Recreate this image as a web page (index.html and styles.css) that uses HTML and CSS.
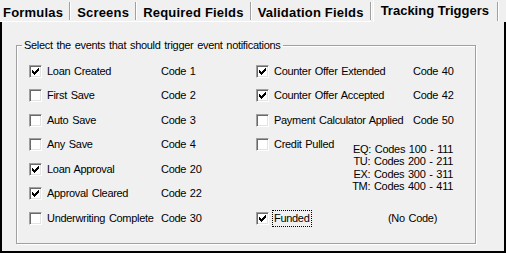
FILE: index.html
```html
<!DOCTYPE html>
<html lang="en">
  <head>
    <meta charset="utf-8">
    <title>Tracking Triggers</title>
    <link rel="stylesheet" href="styles.css">
  </head>
  <body>

  <div class="tabs">
    <div class="tab first">Formulas</div>
    <div class="tab">Screens</div>
    <div class="tab">Required Fields</div>
    <div class="tab">Validation Fields</div>
    <div class="tab active">Tracking Triggers</div>
  </div>

  <div class="panel">
    <fieldset class="group">
      <legend>Select the events that should trigger event notifications</legend>
      <div class="events">
        <div class="ev"><span class="box"><svg width="11" height="11" viewBox="0 0 11 11"><path d="M2 4h1v3h-1zM3 5h1v3h-1zM4 6h1v3h-1zM5 5h1v3h-1zM6 4h1v3h-1zM7 3h1v3h-1zM8 2h1v3h-1z"/></svg></span>Loan Created</div>
        <div class="code">Code 1</div>
        <div class="ev"><span class="box"><svg width="11" height="11" viewBox="0 0 11 11"><path d="M2 4h1v3h-1zM3 5h1v3h-1zM4 6h1v3h-1zM5 5h1v3h-1zM6 4h1v3h-1zM7 3h1v3h-1zM8 2h1v3h-1z"/></svg></span>Counter Offer Extended</div>
        <div class="code">Code 40</div>

        <div class="ev"><span class="box"></span>First Save</div>
        <div class="code">Code 2</div>
        <div class="ev"><span class="box"><svg width="11" height="11" viewBox="0 0 11 11"><path d="M2 4h1v3h-1zM3 5h1v3h-1zM4 6h1v3h-1zM5 5h1v3h-1zM6 4h1v3h-1zM7 3h1v3h-1zM8 2h1v3h-1z"/></svg></span>Counter Offer Accepted</div>
        <div class="code">Code 42</div>

        <div class="ev"><span class="box"></span>Auto Save</div>
        <div class="code">Code 3</div>
        <div class="ev"><span class="box"></span>Payment Calculator Applied</div>
        <div class="code">Code 50</div>

        <div class="ev"><span class="box"></span>Any Save</div>
        <div class="code">Code 4</div>
        <div class="credit">
          <div class="ev"><span class="box"></span>Credit Pulled</div>
          <div class="bureaus">
            <div>EQ: Codes 100 - 111</div>
            <div>TU: Codes 200 - 211</div>
            <div>EX: Codes 300 - 311</div>
            <div>TM: Codes 400 - 411</div>
          </div>
        </div>

        <div class="ev"><span class="box"><svg width="11" height="11" viewBox="0 0 11 11"><path d="M2 4h1v3h-1zM3 5h1v3h-1zM4 6h1v3h-1zM5 5h1v3h-1zM6 4h1v3h-1zM7 3h1v3h-1zM8 2h1v3h-1z"/></svg></span>Loan Approval</div>
        <div class="code">Code 20</div>

        <div class="ev"><span class="box"><svg width="11" height="11" viewBox="0 0 11 11"><path d="M2 4h1v3h-1zM3 5h1v3h-1zM4 6h1v3h-1zM5 5h1v3h-1zM6 4h1v3h-1zM7 3h1v3h-1zM8 2h1v3h-1z"/></svg></span>Approval Cleared</div>
        <div class="code">Code 22</div>

        <div class="ev"><span class="box"></span>Underwriting Complete</div>
        <div class="code">Code 30</div>
        <div class="ev"><span class="box"><svg width="11" height="11" viewBox="0 0 11 11"><path d="M2 4h1v3h-1zM3 5h1v3h-1zM4 6h1v3h-1zM5 5h1v3h-1zM6 4h1v3h-1zM7 3h1v3h-1zM8 2h1v3h-1z"/></svg></span><span class="focus">Funded</span></div>
        <div class="code nocode">(No Code)</div>
      </div>
    </fieldset>
  </div>

  </body>
</html>
```

FILE: styles.css
```css
html {
  height: 100%;
}
body {
  margin: 0;
  padding: 0;
  width: 506px;
  height: 253px;
  display: flex;
  flex-direction: column;
  background: #f0f0f0;
  color: #000;
  font-family: "Liberation Sans", Arial, sans-serif;
  font-size: 11px;
  line-height: 13px;
  letter-spacing: -0.3px;
  word-spacing: 1px;
  overflow: hidden;
}

/* tab strip */
.tabs {
  display: flex;
  height: 22px;
  flex: none;
}
.tab {
  font: bold 13px "Liberation Sans", Arial, sans-serif;
  letter-spacing: 0.2px;
  word-spacing: 0;
  line-height: 15px;
  padding: 5px 7px 0 7px;
  height: 16px;
  border-bottom: 1px solid #fff;
  position: relative;
}
.tab::after {
  content: "";
  position: absolute;
  right: 0;
  top: 2px;
  bottom: 1px;
  width: 1px;
  background: #a0a0a0;
  box-shadow: 1px 0 #fff;
}
.tab.first {
  padding-left: 3px;
}
.tab.active {
  letter-spacing: 0;
  padding: 3px 9px 0 7px;
  height: 19px;
  border-bottom: 0;
  border-left: 1px solid #fff;
  margin-left: 2px;
}

/* page area */
.panel {
  flex: 1;
  border: 2px solid #000;
  border-top: 0;
  padding: 17px 28px 0 14px;
}
.group {
  margin: 0;
  padding: 7px 0 12px 12px;
  min-width: 0;
  border: 1px solid #a0a0a0;
  box-shadow: inset 1px 1px #fff, 1px 1px #fff;
}
.group legend {
  padding: 0 2px;
  margin-left: -7px;
  line-height: 13px;
}

.events {
  display: grid;
  grid-template-columns: 132px 95px 157px 1fr;
  grid-template-rows: repeat(7, 24.5px);
}
.ev {
  display: flex;
  align-items: center;
  gap: 5px;
  height: 24.5px;
  white-space: nowrap;
}
.code {
  display: flex;
  align-items: center;
  white-space: nowrap;
}
.code.nocode {
  margin-left: -25px;
}

.box {
  flex: none;
  width: 11px;
  height: 11px;
  border: 1px solid;
  border-color: #a0a0a0 #fff #fff #a0a0a0;
  box-shadow: inset 1px 1px #696969, inset -1px -1px #e3e3e3;
  background: #fff;
}
.box svg {
  display: block;
  shape-rendering: crispEdges;
}

.credit {
  grid-column: 3 / 5;
  grid-row: 4 / 7;
  display: flex;
  align-items: flex-start;
}
.bureaus {
  margin: 10px 22px 0 auto;
  text-align: right;
  line-height: 12.5px;
  white-space: nowrap;
}

.focus {
  border: 1px dotted #000;
  padding: 1px 1px;
  margin-left: -2px;
}
```
